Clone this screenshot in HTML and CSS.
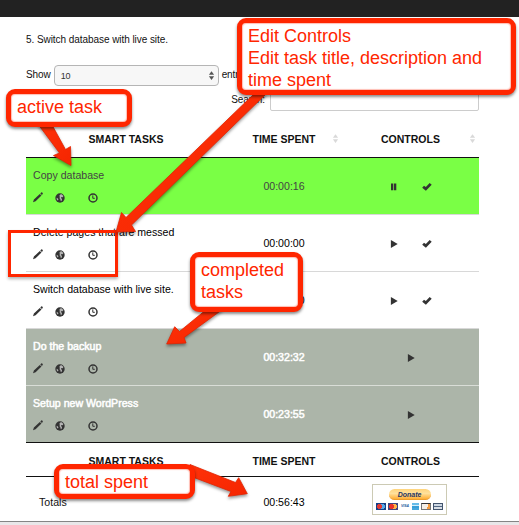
FILE: index.html
```
<!DOCTYPE html>
<html lang="en">
<head>
<meta charset="utf-8">
<title>Smart Tasks</title>
<link rel="stylesheet" href="styles.css">
</head>
<body>
<svg class="defs" aria-hidden="true">
  <defs>
    <symbol id="pencil" viewBox="0 0 12 12"><path d="M1 11.200 1.900 8.600 7.800 2.900 9.500 4.600 3.600 10.200ZM8.300 2.400 9.200 1.500Q9.700 1.100 10.200 1.600L10.700 2.100Q11 2.600 10.700 3.100L9.900 4Z"/></symbol>
    <symbol id="globe" viewBox="0 0 12 12"><circle cx="6" cy="6" r="4.7"/><path class="land" d="M6.200 2.500 7.600 2.300 9.400 4 8.700 5.200 7.500 4.900 6.900 6 8.100 7.100 7.400 9.200 6.500 8.400 6.300 7.100 5.500 6.200 5.900 4.700 5.300 4ZM2.600 5.700 3.900 6.500 4.400 7.600 3.900 8.600 2.800 7.500Z"/></symbol>
    <symbol id="clock" viewBox="0 0 12 12"><circle class="ring" cx="6" cy="6" r="4"/><path class="hand" d="M5.8 3.4V6.3H7.8"/></symbol>
    <symbol id="pause" viewBox="0 0 12 12"><path d="M3 2.500H5.300V9.200H3ZM6 2.500H8.300V9.200H6Z"/></symbol>
    <symbol id="play" viewBox="0 0 12 12"><path d="M2.900 1.900 9.700 6 2.900 10Z"/></symbol>
    <symbol id="check" viewBox="0 0 12 12"><path d="M1.200 6.700 3 4.800 4.800 6.100 8.700 1.900 10.700 3.800 4.900 9.800Z"/></symbol>
    <symbol id="sort" viewBox="0 0 8 12"><path d="M1 5.2 4 1 7 5.2ZM1 6.8H7L4 11Z"/></symbol>
  </defs>
</svg>

<div class="topbar"></div>
<main class="page">
  <p class="note">5. Switch database with live site.</p>
  <div class="length">
    <span>Show</span>
    <div class="select"><span>10</span><svg class="sort"><use href="#sort"/></svg></div>
    <span>entries</span>
  </div>
  <div class="search"><label for="q">Search:</label><input id="q" type="text"></div>

  <section class="table">
    <div class="row head"><div>SMART TASKS</div><div>TIME SPENT<svg class="sort"><use href="#sort"/></svg></div><div>CONTROLS<svg class="sort"><use href="#sort"/></svg></div></div>
    <div class="row task active">
      <div class="name"><span>Copy database</span><div class="icons"><svg><use href="#pencil"/></svg><svg><use href="#globe"/></svg><svg><use href="#clock"/></svg></div></div>
      <div class="time">00:00:16</div>
      <div class="controls"><svg><use href="#pause"/></svg><svg><use href="#check"/></svg></div>
    </div>
    <div class="row task">
      <div class="name"><span>Delete pages that are messed</span><div class="icons"><svg><use href="#pencil"/></svg><svg><use href="#globe"/></svg><svg><use href="#clock"/></svg></div></div>
      <div class="time">00:00:00</div>
      <div class="controls"><svg><use href="#play"/></svg><svg><use href="#check"/></svg></div>
    </div>
    <div class="row task">
      <div class="name"><span>Switch database with live site.</span><div class="icons"><svg><use href="#pencil"/></svg><svg><use href="#globe"/></svg><svg><use href="#clock"/></svg></div></div>
      <div class="time">00:00:00</div>
      <div class="controls"><svg><use href="#play"/></svg><svg><use href="#check"/></svg></div>
    </div>
    <div class="row task done">
      <div class="name"><span>Do the backup</span><div class="icons"><svg><use href="#pencil"/></svg><svg><use href="#globe"/></svg><svg><use href="#clock"/></svg></div></div>
      <div class="time">00:32:32</div>
      <div class="controls"><svg><use href="#play"/></svg></div>
    </div>
    <div class="row task done">
      <div class="name"><span>Setup new WordPress</span><div class="icons"><svg><use href="#pencil"/></svg><svg><use href="#globe"/></svg><svg><use href="#clock"/></svg></div></div>
      <div class="time">00:23:55</div>
      <div class="controls"><svg><use href="#play"/></svg></div>
    </div>
    <div class="row head foot"><div>SMART TASKS</div><div>TIME SPENT</div><div>CONTROLS</div></div>
    <div class="row totals">
      <div class="label">Totals</div>
      <div class="time">00:56:43</div>
      <div class="controls">
        <div class="donate">
          <span class="pill">Donate</span>
          <div class="cards">
            <i class="card maestro"></i><i class="card master"></i><i class="card visa">VISA</i><i class="card amex"></i><i class="card discover"></i><i class="card bank"></i>
          </div>
        </div>
      </div>
    </div>
  </section>
</main>
<div class="bottombar"></div>

<div class="focus-box"></div>
<svg class="arrows" viewBox="0 0 519 525" aria-hidden="true">
  <defs><linearGradient id="red" x1="0" y1="0" x2="1" y2="1"><stop offset="0" stop-color="#ff3209"/><stop offset="1" stop-color="#f52500"/></linearGradient></defs>
  <path d="M38 124H51.500L65.500 149.500 70.500 146.500 71 165.500 53.500 155.500 59.500 153Z"/>
  <path d="M255 93H267L131.500 225 135.500 231.500 116 232 121.500 212.500 126 217.500Z"/>
  <path d="M207 309H223L184 337.500 186 343 166.700 344 174.700 326.700 179.500 331.500Z"/>
  <path d="M190 464.500 235.500 482.500 238.700 477.700 247.300 493.700 228.300 496.300 231 491.500 190 476Z"/>
</svg>
<div class="callout edit">Edit Controls<br>Edit task title, description and<br>time spent</div>
<div class="callout current">active task</div>
<div class="callout completed">completed<br>tasks</div>
<div class="callout total">total spent</div>
</body>
</html>
```
FILE: styles.css
```
* { box-sizing: border-box; }
body {
  margin: 0;
  position: relative;
  width: 519px;
  height: 525px;
  overflow: hidden;
  background: #fff;
  color: #111;
  font: 10px/14px "Liberation Sans", Arial, sans-serif;
}
svg { display: block; flex: none; }
.defs { position: absolute; width: 0; height: 0; }
.topbar { height: 17px; background: #222; }
.page { height: 504px; padding: 16px 40px 0 26px; }
.note { margin: 0; height: 32px; line-height: 14px; letter-spacing: -.06px; }
.length { display: flex; align-items: center; height: 21px; letter-spacing: -.1px; }
.length > span { position: relative; top: -1px; }
.select {
  display: flex;
  align-items: center;
  justify-content: space-between;
  width: 165px;
  height: 21px;
  margin: 0 3px 0 3px;
  padding: 0 3px 0 6px;
  border: 1px solid #b5b5b5;
  border-radius: 4px;
  background: #f7f7f7;
  color: #333;
  font-size: 9px;
}
.sort { width: 7px; height: 11px; fill: #555; }
.search { display: flex; justify-content: flex-end; align-items: center; gap: 5px; margin-top: 3px; height: 22px; letter-spacing: -.1px; }
.search input { width: 209px; height: 22px; margin: 0; border: 1px solid #ccc; border-radius: 2px; background: #fff; }

.table { margin-top: 10px; font-size: 10.600px; }
.row { display: grid; grid-template-columns: 200px 116px 137px; align-items: center; text-align: center; }
.head { height: 37px; border-bottom: 1px solid #111; font-size: 10.500px; font-weight: bold; }
.head > div { position: relative; }
.head .sort { position: absolute; right: 3px; top: 1px; fill: #d9d9d9; }
.foot { height: 34px; padding-top: 3px; }
.task { height: 57px; border-bottom: 1px solid #d8d8d8; }
.name { align-self: start; padding: 10px 0 0 7px; text-align: left; color: #000; }
.name span { display: block; white-space: nowrap; }
.time { color: #000; }
.icons { display: flex; align-items: center; margin: 10px 0 0 -1px; height: 12px; }
.task svg { width: 12px; height: 12px; fill: #333; }
.icons svg:nth-child(1) { margin-top: -3px; }
.icons svg:nth-child(2) { margin-left: 10px; }
.icons svg:nth-child(3) { margin-left: 21px; }
.land { fill: #b4b4b4; }
.ring { fill: none; stroke: #333; stroke-width: 1.500; }
.hand { fill: none; stroke: #333; stroke-width: 1; }
.controls { display: flex; justify-content: center; align-items: center; gap: 21px; padding-top: 2px; }
.active { background: #7aff45; }
.active .name, .active .time { color: #444; }
.done { background: #acb5a9; border-color: #d9ddd7; }
.done .name span, .done .time { color: #fff; -webkit-text-stroke: .5px #fff; }
.done:nth-child(6) { border-color: #111; }
.totals { height: 45px; }
.totals .label { padding: 5px 0 0 13px; text-align: left; }
.totals .time { padding-top: 5px; }
.totals .controls { padding: 0; }
.donate { width: 75px; height: 31px; margin-left: -2px; border: 1px solid #cccab4; padding: 4px 3px 0; }
.pill {
  display: block;
  width: 42px;
  height: 11px;
  margin: 0 auto;
  border-radius: 6px;
  border-bottom: 1px solid #ed9d2d;
  background: linear-gradient(#ffd47c, #ffe19c 45%, #ffae34);
  color: #1d3463;
  font: italic bold 7px/11px "Liberation Sans", Arial, sans-serif;
}
.cards { display: flex; justify-content: space-between; margin-top: 3px; }
.card { width: 10px; height: 7px; font: italic bold 3.500px/7px "Liberation Sans", Arial, sans-serif; }
.maestro { background: radial-gradient(circle at 3.500px 3.500px, #e23b35 2.300px, transparent 2.800px), radial-gradient(circle at 6.500px 3.500px, #58a9e8 2.300px, #173f85 2.800px); }
.master { background: radial-gradient(circle at 3.500px 3.500px, #e8332a 2.300px, transparent 2.800px), radial-gradient(circle at 6.500px 3.500px, #ffb347 2.300px, #3e4580 2.800px); }
.visa { color: #17559c; }
.amex { width: 7px; background: linear-gradient(#68bce9 30%, #d5effb 30% 45%, #389fd8 45% 65%, #c0e5f5 65% 78%, #46a7dd 78%); }
.discover { border: 1px solid #777; border-top-color: #333; background: linear-gradient(115deg, #f5efe7 65%, #f49a3e 65%); }
.bank { border: 1px solid #42546d; background: linear-gradient(#cdd7e2 35%, #536782 35% 65%, #d8dee5 65%); }
.bottombar { height: 4px; border-top: 1px solid #858585; background: #e9e7e9; }

.callout {
  position: absolute;
  border: 5px solid #ff2600;
  border-radius: 9px;
  background: #fff;
  color: #ff2600;
  font-size: 18px;
  line-height: 22px;
  white-space: nowrap;
  box-shadow: 0 2px 3px rgba(0, 0, 0, .45), inset 0 0 1px 1px rgba(255, 38, 0, .3);
}
.edit { left: 237px; top: 18px; width: 279px; height: 77px; padding: 2px 6px; }
.current { left: 6px; top: 89px; width: 126px; height: 38px; padding: 2px 6px; }
.completed { left: 190px; top: 252px; width: 113px; height: 60px; padding: 2px 6px; }
.total { left: 54px; top: 464px; width: 141px; height: 35px; padding: 2px 6px; }
.focus-box { position: absolute; left: 8px; top: 230px; width: 110px; height: 47px; border: 3px solid #ff2600; box-shadow: 0 2px 3px rgba(0, 0, 0, .3); }
.arrows { position: absolute; left: 0; top: 0; width: 519px; height: 525px; filter: drop-shadow(0 2px 1.500px rgba(0, 0, 0, .4)); }
.arrows path { fill: url(#red); stroke: #e32200; stroke-width: .8; }
```
